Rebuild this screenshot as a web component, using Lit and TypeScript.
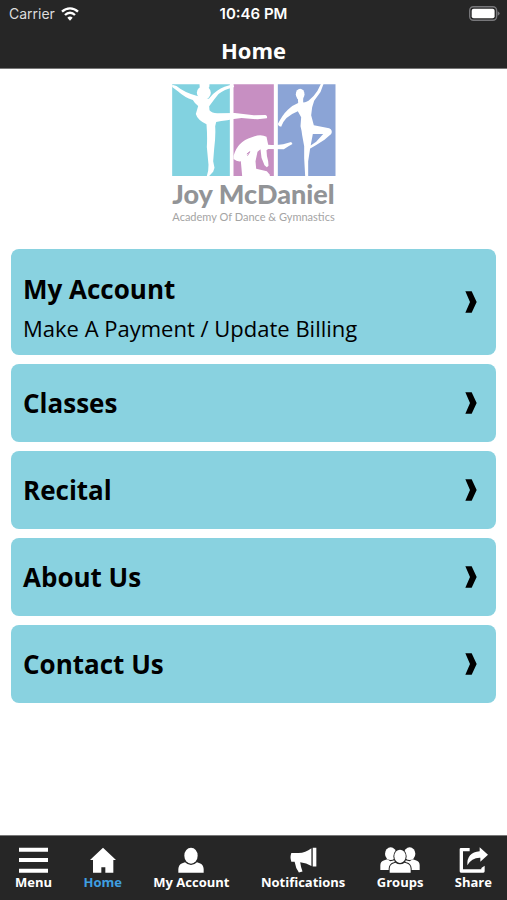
import { LitElement, html, css, svg } from "lit";
import { customElement, property } from "lit/decorators.js";

const wifi = svg`<svg class="wifi" viewBox="0 0 54 42" aria-hidden="true">
  <path d="M3 14C17 1 37 1 51 14" fill="none" stroke="#fff" stroke-width="7"/>
  <path d="M12 24C21 15 33 15 42 24" fill="none" stroke="#fff" stroke-width="7"/>
  <path d="M19 32Q27 25 35 32L27 41Z" fill="#fff"/></svg>`;

const battery = svg`<svg class="battery" viewBox="0 0 92 44" aria-hidden="true">
  <rect x="2" y="2" width="80" height="40" rx="11" fill="none" stroke="#77777a" stroke-width="4"/>
  <rect x="8" y="8" width="68" height="28" rx="6" fill="#fff"/>
  <path d="M85 15Q91 18 91 22T85 29Z" fill="#77777a"/></svg>`;

const icons: Record<string, unknown> = {
  menu: svg`<svg viewBox="0 0 87 78" width="29" height="26" aria-hidden="true"><path d="M0 2H87V14H0ZM0 33H87V45H0ZM0 65H87V77H0Z"/></svg>`,
  home: svg`<svg viewBox="0 0 78 78" width="26" height="26" aria-hidden="true"><path d="M39 2L78 39H70V77H46V61H34V77H9V39H0Z"/></svg>`,
  account: svg`<svg viewBox="0 0 78 78" width="26" height="26" aria-hidden="true"><ellipse cx="39" cy="26" rx="20" ry="24"/><path d="M1 77V66Q2 53 13 49L21 46Q29 54 39 54T57 46L65 49Q76 53 77 66V77Z"/></svg>`,
  notifications: svg`<svg viewBox="0 0 82 78" width="27" height="26" aria-hidden="true"><path d="M4 18H26Q47 16 65 3V57Q50 48 31 46Q33 62 38 74L27 77Q17 63 14 44H4Q-1 31 4 18ZM69 2H80V59H69Z"/></svg>`,
  groups: svg`<svg viewBox="0 0 120 78" width="40" height="26" aria-hidden="true">
    <ellipse cx="32" cy="20" rx="17" ry="19"/><ellipse cx="89" cy="20" rx="17" ry="19"/>
    <path d="M1 69V55Q1 43 13 40L22 37L31 43L44 40V69ZM119 69V55Q119 43 107 40L98 37L89 43L76 40V69Z"/>
    <g class="front"><ellipse cx="60" cy="28" rx="17" ry="20"/><path d="M29 77V65Q30 52 42 49L46 47Q60 57 74 47L79 49Q91 52 92 65V77Z"/></g></svg>`,
  share: svg`<svg viewBox="0 0 87 78" width="29" height="26" aria-hidden="true"><path d="M32 3H6Q2 3 2 7V73Q2 77 6 77H73Q77 77 77 73V56L67 63V67H12V13H32ZM62 1L87 23L64 44V32Q38 31 25 55Q23 16 62 13Z"/></svg>`,
};

const logo = svg`<svg class="art" viewBox="25 18 491 276" aria-hidden="true">
  <path fill="#82d2e0" d="M25 19H198V294H25Z"/>
  <path fill="#c78fc2" d="M209 19H330V294H209Z"/>
  <path fill="#8ba4d6" d="M342 19H515V294H342Z"/>
  <g fill="#fff">
    <ellipse cx="120" cy="44" rx="21" ry="20"/>
    <path d="M107 18H137Q139 26 131 34H113Q105 26 107 18Z"/>
    <path d="M25 20L38 24Q62 44 98 53L135 62Q147 46 160 38Q180 25 208 19L211 27Q180 35 164 48Q148 68 136 85L137 97Q145 107 163 106L213 105L270 112L305 111Q312 114 309 121L281 124L233 120Q185 127 157 132L154 145Q156 174 151 212L148 250L152 269L148 281L136 294H129L133 278L134 260L129 207Q131 177 128 139Q101 126 96 108L103 84Q91 74 87 66Q61 57 44 41L25 27Z"/>
    <path d="M209 234Q216 211 228 199Q242 184 264 178Q289 166 308 176L313 200Q335 203 358 199L382 192L386 198L374 205L360 214L313 213L308 217Q308 232 313 250L314 263L309 268L302 262L293 239L290 214L281 221L275 250L277 272L309 280L318 290V294H235L231 250Q220 252 209 243Z"/>
    <ellipse cx="409" cy="49" rx="13" ry="17"/>
    <path d="M402 60L403 75Q385 82 372 95Q356 110 342 138L345 144L352 146Q358 130 368 120Q386 106 402 100L412 118L410 145Q414 160 415 172L421 205V241L424 294H433V250L439 211L447 168H478L457 191L437 205L438 212L456 202L482 185L502 168Q508 157 496 151Q473 146 450 142L442 112L445 88L451 68L470 42L479 18H471L461 38Q450 56 434 68Q424 74 418 73V60Z"/>
  </g>
  <path d="M249 228L258 221L251 233" fill="none" stroke="#c78fc2" stroke-width="3"/>
</svg>`;

@customElement("menu-card")
class MenuCard extends LitElement {
  @property() heading = "";
  @property() detail = "";
  static styles = css`
    :host { display: block; }
    .card {
      width: 100%; min-height: 78px; padding: 12px 19px 12px 12px;
      display: flex; align-items: center; justify-content: space-between;
      border: 0; border-radius: 8px; background: #89d2e0; color: #000;
      font-family: "Open Sans", "Noto Sans", sans-serif; text-align: left; cursor: pointer;
      box-sizing: border-box;
    }
    .copy { display: flex; flex-direction: column; gap: 4px; }
    .heading { font-size: 26px; line-height: 38px; font-weight: 700; }
    .detail { font-size: 22px; line-height: 32px; }
    .tall { padding-top: 11px; padding-bottom: 11px; }
    .tall .copy { padding-top: 10px; }
    .chevron { width: 12px; height: 22px; flex: none; }
  `;
  render() {
    return html`<button class="card ${this.detail ? "tall" : ""}">
      <span class="copy"><span class="heading">${this.heading}</span>
      ${this.detail ? html`<span class="detail">${this.detail}</span>` : ""}</span>
      <svg class="chevron" viewBox="0 0 36 66" aria-hidden="true"><path d="M1 1H20L35 33L20 65H1L15 33Z"/></svg>
    </button>`;
  }
}

@customElement("app-root")
class AppRoot extends LitElement {
  static styles = css`
    :host {
      display: flex; flex-direction: column; min-height: 100vh; background: #fff;
      font-family: "Open Sans", "Noto Sans", sans-serif;
    }
    .top { background: #262626; color: #fff; border-bottom: 1px solid #777; }
    .status {
      display: grid; grid-template-columns: 1fr auto 1fr; align-items: center; height: 27px;
      padding: 0 7px; font: 14px/20px Inter, sans-serif;
    }
    .carrier { display: flex; align-items: center; gap: 6px; padding-left: 2px; color: #ddd; }
    .time { font-size: 15px; font-weight: 600; }
    .wifi { width: 18px; height: 14px; }
    .battery { width: 31px; height: 15px; justify-self: end; }
    h1 { margin: 0; font-size: 22px; line-height: 46px; height: 41px; font-weight: 700; text-align: center; }
    main { flex: 1; padding: 15px 11px; }
    .logo { display: flex; flex-direction: column; align-items: center; margin-bottom: 25px; font-family: Lato, sans-serif; color: #929497; white-space: nowrap; }
    .art { width: 164px; height: 92px; display: block; margin-bottom: 2px; }
    .name { font-size: 27px; line-height: 32px; font-weight: 900; }
    .tag { font-size: 11px; line-height: 14px; color: #a4a4a4; }
    .list { display: flex; flex-direction: column; gap: 9px; }
    .tabs {
      display: flex; justify-content: space-between; padding: 11px 15px 9px;
      background: #262626; border-top: 1px solid #777;
    }
    .tab {
      display: flex; flex-direction: column; align-items: center;
      color: #fff; text-decoration: none; font-size: 13px; line-height: 18px; font-weight: 700;
    }
    .tab svg { fill: #fff; }
    .front { stroke: #262626; stroke-width: 6; paint-order: stroke; }
    .active { color: #3f9fe0; }
  `;
  cards = [
    ["My Account", "Make A Payment / Update Billing"],
    ["Classes", ""], ["Recital", ""], ["About Us", ""], ["Contact Us", ""],
  ];
  tabs = [
    ["menu", "Menu"], ["home", "Home"], ["account", "My Account"],
    ["notifications", "Notifications"], ["groups", "Groups"], ["share", "Share"],
  ];
  render() {
    return html`
      <header class="top">
        <div class="status"><span class="carrier">Carrier ${wifi}</span><span class="time">10:46 PM</span>${battery}</div>
        <h1>Home</h1>
      </header>
      <main>
        <div class="logo">${logo}<span class="name">Joy McDaniel</span><span class="tag">Academy Of Dance &amp; Gymnastics</span></div>
        <div class="list">${this.cards.map(([h, d]) => html`<menu-card .heading=${h} .detail=${d}></menu-card>`)}</div>
      </main>
      <nav class="tabs">${this.tabs.map(([i, l]) => html`<a href="#${i}" class="tab ${i === "home" ? "active" : ""}">${icons[i]}<span>${l}</span></a>`)}</nav>`;
  }
}
